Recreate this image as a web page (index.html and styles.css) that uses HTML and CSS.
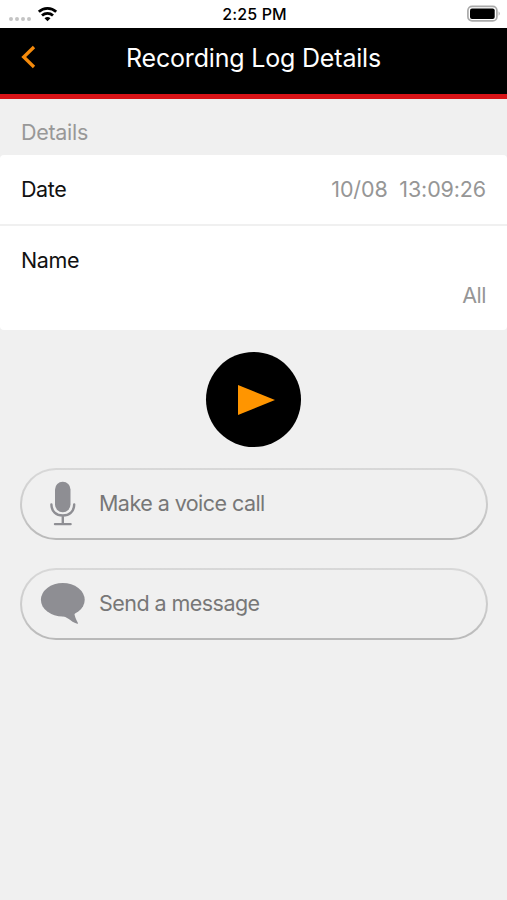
FILE: index.html
```html
<!DOCTYPE html>
<html lang="en">
<head>
<meta charset="utf-8">
<title>Recording Log Details</title>
<link rel="stylesheet" href="styles.css">
</head>
<body>
<div class="status">
  <svg class="signal" width="52" height="18" viewBox="0 0 52 18">
    <g fill="#c4c4c4"><circle cx="3" cy="13" r="2"/><circle cx="9" cy="13" r="2"/><circle cx="15" cy="13" r="2"/><circle cx="21" cy="13" r="2"/></g>
    <g fill="none" stroke="#000" stroke-width="2.8"><path d="M30.8 5.7a12.8 12.8 0 0 1 17.4 0"/><path d="M34 9.5a8.2 8.2 0 0 1 11 0"/></g>
    <path d="M36.5 12.3a4.5 4.5 0 0 1 6 0l-3 3z"/>
  </svg>
  <span class="clock">2:25 PM</span>
  <svg class="battery" width="34" height="18" viewBox="0 0 34 18">
    <rect x=".9" y="1.3" width="29" height="14.6" rx="4.2" fill="#fff" stroke="#aaa" stroke-width="1.7"/>
    <rect x="3" y="3.4" width="24.7" height="10.6" rx="2"/>
    <path d="M31.6 6.2q2.3 2.3 0 4.6z" fill="#aaa"/>
  </svg>
</div>
<header class="nav">
  <svg class="back" width="16" height="24" viewBox="0 0 16 24"><path d="M14 2 3.7 12 14 22" fill="none" stroke="#f58a0b" stroke-width="3.3"/></svg>
  <h1 class="title">Recording Log Details</h1>
</header>
<main>
  <h2 class="section">Details</h2>
  <div class="card">
    <div class="row"><span class="label">Date</span><span class="value date">10/08&nbsp; 13:09:26</span></div>
    <div class="row tall"><span class="label">Name</span><span class="value all">All</span></div>
  </div>
  <button class="play" aria-label="Play"><svg width="38" height="30" viewBox="0 0 38 30"><path d="M0 0 37 15 0 30z" fill="#ff9500"/></svg></button>
  <button class="action">
    <svg width="46" height="46" viewBox="0 0 46 46"><rect x="15" y=".8" width="15.5" height="30.5" rx="7.7" fill="#8e8e93"/><path d="M11.4 23.500C11.400 30.500 16.200 34.500 22.800 34.500s11.400-4 11.400-11M22.800 34.500v8.500M15 43.100h15.600" fill="none" stroke="#8e8e93" stroke-width="2.400" stroke-linecap="round"/></svg>
    <span class="call">Make a voice call</span>
  </button>
  <button class="action">
    <svg width="46" height="46" viewBox="0 0 46 46"><g fill="#8e8e93"><ellipse cx="22.800" cy="18.800" rx="21.900" ry="16.700"/><path d="M21 35c6-.3 9 5.500 16.200 7.800.8.200.9-.3.600-1-1.700-3.300-3.300-6.800-3.600-10.800z"/></g></svg>
    <span class="message">Send a message</span>
  </button>
</main>
</body>
</html>
```
FILE: styles.css
```css
* { box-sizing: border-box; }
body {
  margin: 0;
  min-height: 900px;
  background: #f0f0f0;
  font-family: Inter, "Liberation Sans", sans-serif;
  font-size: 21.5px;
  line-height: 28px;
}
svg { display: block; flex: none; }
.status {
  display: grid;
  grid-template-columns: 1fr auto 1fr;
  align-items: center;
  height: 28px;
  padding: 0 6px 0 8px;
  background: #fff;
}
.signal { margin-top: 2px; }
.clock { font-size: 16px; font-weight: 500; letter-spacing: .15px; }
.battery { justify-self: end; }
.nav {
  display: grid;
  grid-template-columns: 40px 1fr 40px;
  height: 71px;
  padding: 0 20px;
  background: #000;
  border-bottom: 5px solid #d91317;
}
.back { margin-top: 17px; }
.title {
  margin: 16px 0 0;
  color: #fff;
  font-size: 25px;
  font-weight: 400;
  letter-spacing: -.18px;
  text-align: center;
  white-space: nowrap;
}
.section {
  margin: 0;
  height: 56px;
  padding: 19px 21px 0;
  color: #989898;
  font-size: 21.5px;
  font-weight: 400;
  letter-spacing: -.3px;
}
.card { background: #fff; border-radius: 4px; }
.row {
  display: flex;
  justify-content: space-between;
  height: 71px;
  padding: 20px 21px 0;
  border-bottom: 2px solid #f0f0f0;
}
.row.tall { flex-direction: column; justify-content: flex-start; height: 104px; gap: 7px; border: 0; }
.label { color: #111; letter-spacing: -.4px; }
.value { color: #969696; letter-spacing: -.14px; }
.all { align-self: flex-end; letter-spacing: -.5px; }
.play {
  display: flex;
  align-items: center;
  width: 95px;
  height: 95px;
  margin: 22px 0 21px 205.5px;
  padding: 0 0 0 32px;
  background: #000;
  border: 0;
  border-radius: 50%;
}
.action {
  display: flex;
  align-items: center;
  gap: 13px;
  width: 468px;
  height: 72px;
  margin: 0 0 28px 20px;
  padding: 0 18px;
  color: #777;
  font: inherit;
  letter-spacing: -.55px;
  background:
    linear-gradient(#f0f0f0, #f0f0f0) padding-box,
    linear-gradient(#d8d8d8, #cacaca 60%, #b8b8b8) border-box;
  border: 2px solid transparent;
  border-radius: 36px;
}
.action span { margin-top: -2px; }
```
